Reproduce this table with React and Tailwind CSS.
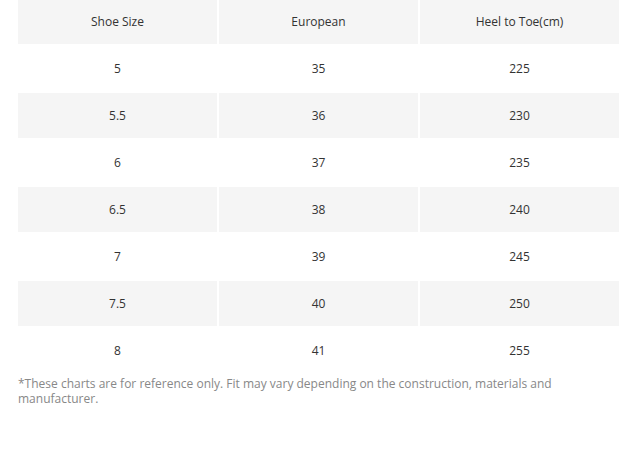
import React from "react";

const rows = [
  ["5", "35", "225"],
  ["5.5", "36", "230"],
  ["6", "37", "235"],
  ["6.5", "38", "240"],
  ["7", "39", "245"],
  ["7.5", "40", "250"],
  ["8", "41", "255"],
];

export default function App() {
  return (
    <div className="bg-white min-h-screen pl-[18px] font-['Open_Sans',sans-serif] text-[#333]">
      {/* size table */}
      <div className="grid grid-cols-[199px_199px_199px] gap-[2px] text-[12px]">
        {["Shoe Size", "European", "Heel to Toe(cm)"].map((h) => (
          <div key={h} className="h-[44px] bg-[#f5f5f5] flex items-center justify-center">
            {h}
          </div>
        ))}
        {rows.map((r, i) =>
          r.map((c, j) => (
            <div
              key={i + "-" + j}
              className={`h-[45px] flex items-center justify-center ${i % 2 ? "bg-[#f5f5f5]" : "bg-white"}`}
            >
              {c}
            </div>
          ))
        )}
      </div>
      <p className="mt-[3px] w-[601px] text-[12px] leading-[15px] text-[#888]">
        *These charts are for reference only. Fit may vary depending on the construction, materials and manufacturer.
      </p>
    </div>
  );
}
